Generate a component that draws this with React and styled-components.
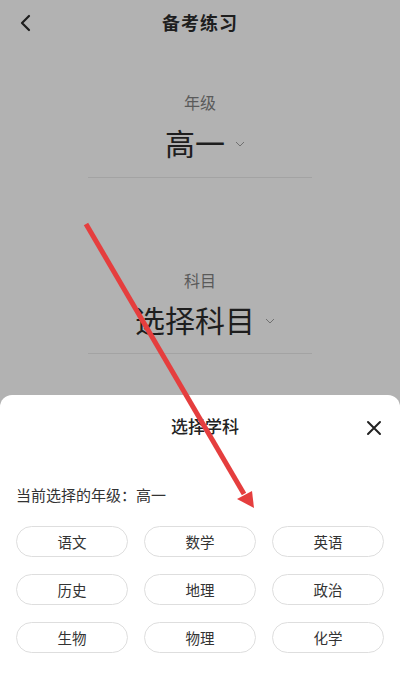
import React from 'react';
import styled, { createGlobalStyle } from 'styled-components';

const GlobalStyle = createGlobalStyle`
  html, body {
    margin: 0;
    padding: 0;
    background: #b2b2b2;
  }
  body {
    font-family: "Noto Sans CJK SC", "Noto Sans", sans-serif;
  }
`;

const Page = styled.div`
  position: relative;
  width: 400px;
  height: 684px;
  overflow: hidden;
  background: #b2b2b2;
  display: flex;
  flex-direction: column;
`;

const Header = styled.div`
  height: 44px;
  display: flex;
  align-items: center;
  justify-content: center;
  position: relative;
`;

const BackButton = styled.div`
  position: absolute;
  left: 18px;
  top: 13px;
  width: 18px;
  height: 18px;
`;

const Title = styled.div`
  font-size: 18px;
  font-weight: 700;
  color: #1e1e1e;
  letter-spacing: 1px;
`;

const Field = styled.div`
  margin: ${(p) => p.top}px auto 0;
  width: 224px;
  display: flex;
  flex-direction: column;
  align-items: center;
  border-bottom: 1px solid #a3a3a3;
`;

const FieldLabel = styled.div`
  font-size: 16px;
  line-height: 20px;
  color: #5a5a5a;
`;

const FieldValue = styled.div`
  margin-top: ${(p) => p.gap}px;
  display: flex;
  align-items: center;
  gap: 10px;
  font-size: 30px;
  line-height: 40px;
  color: #1e1e1e;
  padding-bottom: ${(p) => p.bottom}px;
  padding-left: 10px;
`;

const Caret = styled.svg`
  width: 10px;
  height: 10px;
  margin-top: 4px;
`;

const Sheet = styled.div`
  position: absolute;
  left: 0;
  right: 0;
  top: 395px;
  bottom: 0;
  background: #fff;
  border-radius: 12px 12px 0 0;
  display: flex;
  flex-direction: column;
  padding: 0 16px;
`;

const SheetHeader = styled.div`
  height: 60px;
  display: flex;
  align-items: center;
  justify-content: center;
  position: relative;
`;

const SheetTitle = styled.div`
  font-size: 17px;
  font-weight: 500;
  color: #222;
  margin-left: 10px;
`;

const CloseButton = styled.div`
  position: absolute;
  right: 2px;
  top: 22px;
  width: 16px;
  height: 16px;
`;

const Current = styled.div`
  margin-top: 30px;
  font-size: 15px;
  line-height: 20px;
  color: #333;
`;

const Grid = styled.div`
  margin-top: 21px;
  display: grid;
  grid-template-columns: repeat(3, 1fr);
  column-gap: 16px;
  row-gap: 17px;
`;

const Chip = styled.div`
  height: 29px;
  border: 1px solid #dedede;
  border-radius: 16px;
  display: flex;
  align-items: center;
  justify-content: center;
  font-size: 14.5px;
  color: #333;
`;

const Overlay = styled.svg`
  position: absolute;
  left: 0;
  top: 0;
  width: 400px;
  height: 684px;
  pointer-events: none;
`;

const subjects = ['语文', '数学', '英语', '历史', '地理', '政治', '生物', '物理', '化学'];

const CaretIcon = () => (
  <Caret viewBox="0 0 10 10">
    <path d="M1 3 L5 7 L9 3" fill="none" stroke="#707070" strokeWidth="1" />
  </Caret>
);

const App = () => {
  return (
    <Page>
      <GlobalStyle />
      <Header>
        <BackButton>
          <svg width="18" height="18" viewBox="0 0 18 18">
            <path d="M11 2 L4 9 L11 16" fill="none" stroke="#1e1e1e" strokeWidth="2.2" strokeLinecap="round" strokeLinejoin="round" />
          </svg>
        </BackButton>
        <Title>备考练习</Title>
      </Header>

      <Field top={48}>
        <FieldLabel>年级</FieldLabel>
        <FieldValue gap={10} bottom={15}>
          高一
          <CaretIcon />
        </FieldValue>
      </Field>

      <Field top={92}>
        <FieldLabel>科目</FieldLabel>
        <FieldValue gap={9} bottom={14}>
          选择科目
          <CaretIcon />
        </FieldValue>
      </Field>

      <Sheet>
        <SheetHeader>
          <SheetTitle>选择学科</SheetTitle>
          <CloseButton>
            <svg width="16" height="16" viewBox="0 0 16 16">
              <path d="M2 2 L14 14 M14 2 L2 14" stroke="#222" strokeWidth="2" strokeLinecap="round" />
            </svg>
          </CloseButton>
        </SheetHeader>
        <Current>当前选择的年级：高一</Current>
        <Grid>
          {subjects.map((s) => (
            <Chip key={s}>{s}</Chip>
          ))}
        </Grid>
      </Sheet>

      {/* red annotation arrow */}
      <Overlay viewBox="0 0 400 684">
        <line x1="86" y1="224" x2="244" y2="494" stroke="#e53e3e" strokeWidth="5" />
        <polygon points="254,508 237,499 252,491" fill="#e53e3e" />
      </Overlay>
    </Page>
  );
};

export default App;
